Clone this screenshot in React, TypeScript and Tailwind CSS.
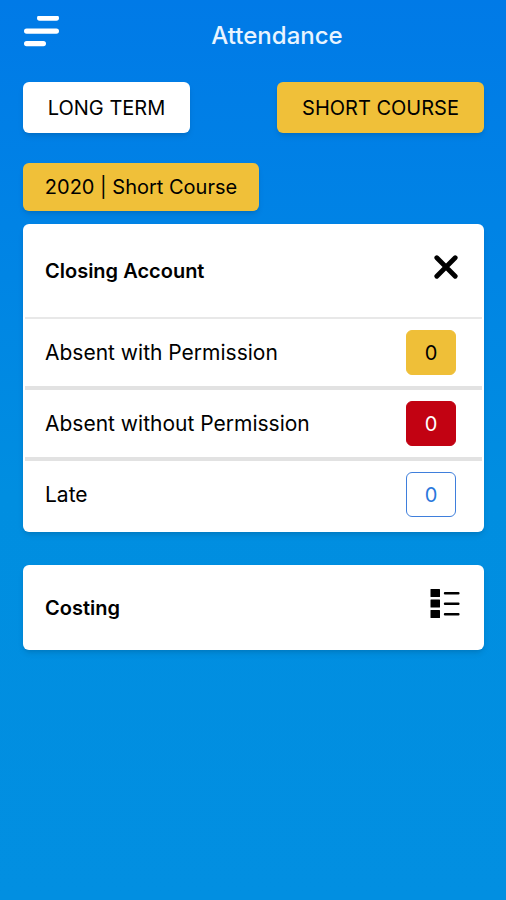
import React, { useState } from 'react';

const COUNTS = [
    { label: 'Absent with Permission', value: 0, badge: 'bg-[#efbf38] text-black border-[#efbf38]' },
    { label: 'Absent without Permission', value: 0, badge: 'bg-[#c20212] text-white border-[#c20212]' },
    { label: 'Late', value: 0, badge: 'bg-white text-[#2a78dc] border-[#3f7fdc]' },
];

const MenuIcon = () => (
    <svg width="36" height="32" viewBox="0 0 36 32" fill="white" aria-hidden="true">
        <rect x="13" y="-0.5" width="22" height="5.2" rx="2.6" />
        <rect x="0" y="12.5" width="35" height="5.2" rx="2.6" />
        <rect x="0" y="25" width="22" height="5.2" rx="2.6" />
    </svg>
);

const CloseIcon = () => (
    <svg width="24" height="24" viewBox="0 0 24 24" stroke="black" strokeWidth="4.8" strokeLinecap="round" aria-hidden="true">
        <path d="M2.8 2.8 21.2 21.2M21.2 2.8 2.8 21.2" />
    </svg>
);

const ListIcon = () => (
    <svg width="30" height="30" viewBox="0 0 30 30" aria-hidden="true">
        <rect x="0.5" y="0" width="9.5" height="8" rx="0.5" />
        <rect x="0.5" y="10.5" width="9.5" height="8" rx="0.5" />
        <rect x="0.5" y="21" width="9.5" height="8" rx="0.5" />
        <path d="M15 4.2H28.4M15 14.8H28.4M15 25.3H28.4" stroke="black" strokeWidth="2.4" strokeLinecap="round" />
    </svg>
);

const App = () => {
    const [open, setOpen] = useState(true);

    return (
        <div className="min-h-screen bg-[linear-gradient(#007ae7,#0083e5_25%,#008ee0_55%,#028fe1)] font-['Inter',sans-serif] text-xl text-black">
            <header className="grid grid-cols-[36px_1fr] items-start pl-6 pr-3 pt-4">
                <button type="button" aria-label="Menu">
                    <MenuIcon />
                </button>
                <h1 className="pt-1 text-center text-2xl leading-8 font-medium text-[#e8f4ff]">Attendance</h1>
            </header>

            <main className="pl-[23px] pr-[22px] pt-[30px]">
                <div className="flex items-center justify-between">
                    <button type="button" className="h-[51px] min-w-[167px] rounded-md bg-white px-5 shadow-md">LONG TERM</button>
                    <button type="button" className="h-[51px] min-w-[207px] rounded-md bg-[#f0c039] px-5 shadow-md">SHORT COURSE</button>
                </div>

                <button type="button" className="mt-[30px] h-12 min-w-[236px] rounded-md bg-[#f0c039] px-5 shadow-md">
                    2020 | Short Course
                </button>

                <section className="mt-[13px] rounded-md bg-white shadow-md">
                    <div className="flex h-[93px] items-center justify-between pl-[22px] pr-[26px]">
                        <h2 className="font-semibold">Closing Account</h2>
                        <button type="button" aria-label="Toggle Closing Account" className="pb-2" onClick={() => setOpen(!open)}>
                            {open ? <CloseIcon /> : <ListIcon />}
                        </button>
                    </div>
                    {open && (
                        <dl className="mx-0.5 divide-y-4 divide-[#e2e2e2] border-t-2 border-[#e8e8e8] pb-1">
                            {COUNTS.map((row) => (
                                <div key={row.label} className="box-content flex h-[67px] items-center justify-between pl-5 pr-[26px]">
                                    <dt className="text-[21px]">{row.label}</dt>
                                    <dd className={`flex h-[45px] w-[50px] items-center justify-center rounded-md border ${row.badge}`}>
                                        {row.value}
                                    </dd>
                                </div>
                            ))}
                        </dl>
                    )}
                </section>

                <section className="mt-[33px] flex h-[85px] items-center justify-between rounded-md bg-white pl-[22px] pr-6 shadow-md">
                    <h2 className="font-semibold">Costing</h2>
                    <button type="button" aria-label="Show Costing" className="pb-2">
                        <ListIcon />
                    </button>
                </section>
            </main>
        </div>
    );
};

export default App;
